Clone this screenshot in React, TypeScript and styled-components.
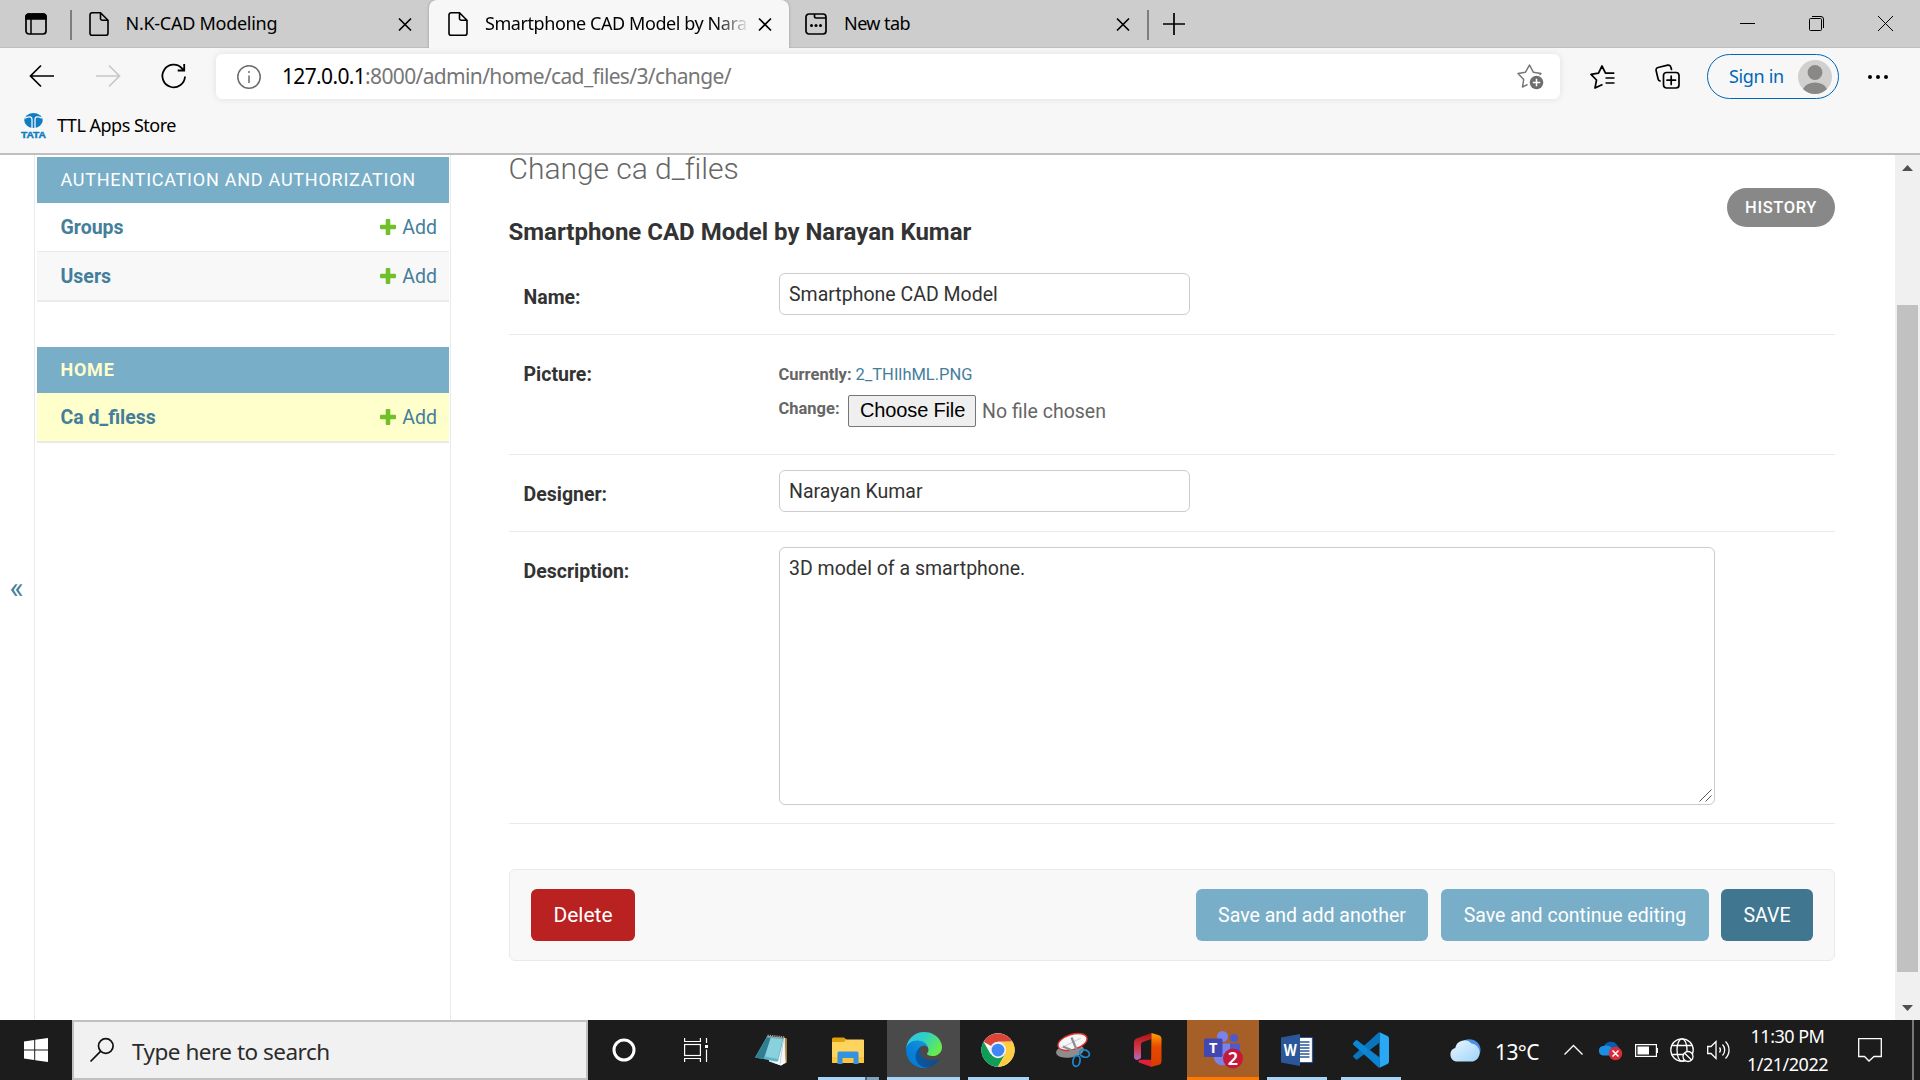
import React from "react";
import styled, { createGlobalStyle, css } from "styled-components";

const GlobalStyle = createGlobalStyle`
  *, *::before, *::after { box-sizing: border-box; }
  body { margin: 0; overflow: hidden; background: #fff; }
  svg { display: block; flex: none; overflow: visible; }
`;

const ui = `"Noto Sans", "Open Sans", sans-serif`;
const web = `Roboto, "Liberation Sans", sans-serif`;

const Screen = styled.div`
  width: 1920px;
  height: 1080px;
  display: flex;
  flex-direction: column;
  overflow: hidden;
  white-space: nowrap;
  font-family: ${ui};
  color: #000;
`;

/* ---------- browser chrome ---------- */
const TabBar = styled.div`
  display: flex;
  align-items: stretch;
  height: 48px;
  background: #cdcdcd;
  box-shadow: inset 0 -1px 0 #bdbdbd;
`;
const TabMenu = styled.div`
  width: 70px;
  padding-left: 25px;
  display: flex;
  align-items: center;
`;
const TabDivider = styled.div`
  width: 1.5px;
  height: 30px;
  margin-top: 10px;
  background: #7d7d7d;
`;
const Tab = styled.div<{ $w: number; $active?: boolean; $pad: number }>`
  width: ${(p) => p.$w}px;
  padding: 0 17px 0 ${(p) => p.$pad}px;
  display: flex;
  align-items: center;
  ${(p) =>
    p.$active &&
    css`
      background: #f7f7f7;
      border-radius: 8px 8px 0 0;
      box-shadow: 0 0 3px rgba(0, 0, 0, 0.25);
      clip-path: inset(0 -3px 0 -3px);
    `}
`;
const TabTitle = styled.div<{ $ls: number; $fade?: boolean }>`
  flex: 1;
  min-width: 0;
  margin: 0 11px 2px 17px;
  font-size: 18px;
  line-height: 45px;
  letter-spacing: ${(p) => p.$ls}px;
  ${(p) => p.$fade && css`mask-image: linear-gradient(to right, #000 88%, transparent 101%);`}
`;
const NewTab = styled.div`
  padding: 13px 0 0 14px;
`;
const WindowControls = styled.div`
  margin-left: auto;
  display: flex;
  gap: 54px;
  padding: 16px 27px 0 0;
`;

const Toolbar = styled.div`
  display: flex;
  align-items: center;
  height: 57px;
  padding: 0 32px 0 29px;
  background: #f7f7f7;
`;
const NavButtons = styled.div`
  display: flex;
  align-items: center;
  gap: 40px;
  width: 187px;
  padding-bottom: 1px;
`;
const AddressBar = styled.div`
  width: 1344px;
  height: 45px;
  padding: 0 16px 0 21px;
  display: flex;
  align-items: center;
  background: #fff;
  border-radius: 6px;
  box-shadow: 0 0 7px rgba(0, 0, 0, 0.1);
`;
const Url = styled.div`
  flex: 1;
  margin: 0 0 2px 21px;
  font-size: 21px;
  line-height: 28px;
  letter-spacing: -0.65px;
  color: #767676;
  b { font-weight: 400; color: #000; }
`;
const ToolIcons = styled.div`
  flex: 1;
  display: flex;
  align-items: center;
  padding-left: 30px;
`;
const SignIn = styled.div`
  width: 132px;
  height: 45px;
  margin: 0 29px 0 27px;
  padding: 0 6px 0 21px;
  display: flex;
  align-items: center;
  justify-content: space-between;
  border: 1.5px solid #0067b8;
  border-radius: 23px;
  color: #0067b8;
  font-size: 18px;
  letter-spacing: -0.35px;
`;
const SignInText = styled.div`
  padding-bottom: 2px;
`;
const Bookmarks = styled.div`
  display: flex;
  align-items: center;
  height: 50px;
  padding: 0 0 7px 21px;
  gap: 11px;
  background: #f7f7f7;
  border-bottom: 2px solid #bfbfbf;
`;
const BookmarkName = styled.div`
  padding-bottom: 2px;
  font-size: 18px;
  letter-spacing: -0.5px;
`;

/* ---------- page ---------- */
const Page = styled.div`
  flex: none;
  height: 865px;
  display: flex;
  overflow: hidden;
  background: #fff;
  font-family: ${web};
  font-size: 19.5px;
  color: #333;
`;
const SidebarToggle = styled.div`
  width: 35px;
  display: flex;
  align-items: center;
  padding-left: 9.5px;
  border-right: 1px solid #eaeaea;
  font-size: 30px;
  color: #447e9b;
`;
const Sidebar = styled.div`
  width: 416px;
  padding: 2px 1px 0 2px;
  border-right: 1px solid #eaeaea;
`;
const AppModule = styled.div`
  margin-bottom: 45px;
  border-bottom: 1px solid #eaeaea;
`;
const AppCaption = styled.div<{ $current?: boolean }>`
  height: 46px;
  padding-left: 23.5px;
  line-height: 46px;
  font-size: 18px;
  letter-spacing: 0.75px;
  background: #79aec8;
  color: ${(p) => (p.$current ? "#ffffcc" : "#fff")};
  font-weight: ${(p) => (p.$current ? 700 : 400)};
`;
const ModelRow = styled.div<{ $bg?: string }>`
  height: 49px;
  padding: 0 12px 0 23.5px;
  display: flex;
  align-items: center;
  background: ${(p) => p.$bg || "#fff"};
  border-bottom: 1px solid #eaeaea;
  color: #447e9b;
`;
const ModelName = styled.div`
  flex: 1;
  font-weight: 700;
`;
const AddLink = styled.div`
  display: flex;
  align-items: center;
  gap: 6px;
`;
const Main = styled.div`
  flex: 1;
  padding: 0 60px 0 58px;
`;
const Title = styled.div`
  height: 32px;
  margin-left: -0.5px;
  font-size: 30px;
  line-height: 28px;
  font-weight: 300;
  letter-spacing: -0.03px;
  color: #666;
`;
const Heading = styled.div`
  display: flex;
  justify-content: space-between;
  align-items: flex-start;
  height: 71px;
`;
const ObjectName = styled.div`
  margin: 30px 0 0 -0.5px;
  font-size: 24px;
  line-height: 30px;
  font-weight: 700;
`;
const History = styled.div`
  width: 108px;
  height: 39px;
  margin-top: 1px;
  text-align: center;
  line-height: 39px;
  border-radius: 20px;
  background: #888;
  color: #fff;
  font-size: 16.5px;
  font-weight: 500;
  letter-spacing: 0.6px;
`;
const FormRow = styled.div<{ $h: number }>`
  display: flex;
  height: ${(p) => p.$h}px;
  padding: 15px 15px 0 14.5px;
  border-bottom: 1px solid #eaeaea;
`;
const Label = styled.div`
  width: 255.5px;
  padding-top: 10px;
  line-height: 30px;
  font-weight: 700;
`;
const Field = styled.div<{ $w: number; $h: number }>`
  position: relative;
  width: ${(p) => p.$w}px;
  height: ${(p) => p.$h}px;
  padding: 0 9px;
  line-height: 41px;
  border: 1px solid #ccc;
  border-radius: 6px;
`;
const Resizer = styled.svg`
  position: absolute;
  right: 2px;
  bottom: 2px;
`;
const FileField = styled.div`
  padding-top: 10px;
  font-size: 16.5px;
  color: #666;
`;
const CurrentFile = styled.div`
  line-height: 30px;
  b { margin: 0 4px 0 -0.5px; }
  span { color: #447e9b; }
`;
const ChangeFile = styled.div`
  display: flex;
  align-items: center;
  margin-top: 5px;
  b { line-height: 20px; margin: -5px 8.5px 0 -0.5px; }
`;
const ChooseFile = styled.div`
  width: 128px;
  height: 32px;
  padding-left: 1px;
  text-align: center;
  line-height: 28px;
  background: #efefef;
  border: 1px solid #767676;
  border-radius: 2px;
  color: #000;
  font-family: "Liberation Sans", Arial, sans-serif;
  font-size: 20px;
  letter-spacing: -0.15px;
`;
const NoFile = styled.div`
  margin-left: 6px;
  font-size: 19.5px;
`;
const SubmitRow = styled.div`
  display: flex;
  align-items: center;
  gap: 12px;
  height: 92px;
  margin-top: 45px;
  padding: 0 21px;
  background: #f8f8f8;
  border: 1px solid #eaeaea;
  border-radius: 6px;
`;
const Button = styled.div<{ $bg: string; $w: number; $size?: number; $mr?: number }>`
  width: ${(p) => p.$w}px;
  height: 52px;
  margin-right: ${(p) => p.$mr || 0}px;
  line-height: ${(p) => (p.$size ? 52 : 54)}px;
  text-align: center;
  border-radius: 6px;
  background: ${(p) => p.$bg};
  color: #fff;
  font-size: ${(p) => p.$size || 19.5}px;
`;
const Spacer = styled.div`
  flex: 1;
`;
const Scrollbar = styled.div`
  width: 25px;
  display: flex;
  flex-direction: column;
  align-items: center;
  padding: 10px 0 9px;
  background: #f0f0f0;
`;
const Thumb = styled.div`
  width: 21px;
  height: 667px;
  margin-top: 134px;
  background: #c1c1c1;
`;

/* ---------- taskbar ---------- */
const Taskbar = styled.div`
  flex: none;
  display: flex;
  height: 60px;
  background: #1c1c1c;
  color: #fff;
`;
const Start = styled.div`
  width: 72px;
  display: grid;
  place-items: center;
`;
const Search = styled.div`
  width: 516px;
  display: flex;
  align-items: center;
  gap: 18px;
  padding-left: 16px;
  background: #f1f1f1;
  border: 2px solid #c0c0c0;
  color: #2b2b2b;
  font-size: 22.5px;
  letter-spacing: -0.5px;
`;
const SearchText = styled.div`
  padding-top: 2px;
`;
const Tile = styled.div<{ $w?: number; $ml?: number; $bg?: string }>`
  width: ${(p) => p.$w || 72}px;
  margin-left: ${(p) => (p.$ml === undefined ? 3 : p.$ml)}px;
  display: flex;
  flex-direction: column;
  align-items: center;
  background: ${(p) => p.$bg || "transparent"};
`;
const TileIcon = styled.div`
  height: 57px;
  padding-top: 3px;
  display: grid;
  place-items: center;
`;
const Underline = styled.div<{ $w: number; $c?: string }>`
  width: ${(p) => p.$w}px;
  height: 3px;
  background: ${(p) => p.$c || "#a6d5fa"};
`;
const Tray = styled.div`
  margin-left: auto;
  width: 471px;
  display: flex;
  align-items: center;
`;
const Temperature = styled.div`
  margin: 3px 0 0 14px;
  width: 69px;
  font-size: 21px;
  letter-spacing: -0.6px;
`;
const Clock = styled.div`
  width: 132px;
  height: 60px;
  padding: 2px 9px 0 0;
  text-align: center;
  font-size: 18px;
  line-height: 28px;
  letter-spacing: -0.5px;
`;
const ShowDesktop = styled.div`
  width: 2px;
  height: 60px;
  margin: 0 6px 0 auto;
  background: #777;
`;
const TrayIcon = styled.div<{ $mr: number }>`
  margin-right: ${(p) => p.$mr}px;
`;

/* ---------- icons ---------- */
const line = { fill: "none", stroke: "#000", strokeWidth: 1.5 } as const;

const DocIcon = () => (
  <svg width="20" height="24" viewBox="0 0 20 24" {...line} strokeWidth={1.6}>
    <path d="M3 .8h8.500L19 8.300v12.900a2 2 0 0 1-2 2H3a2 2 0 0 1-2-2V2.800a2 2 0 0 1 2-2zM11.500 1v5.500a1.800 1.800 0 0 0 1.800 1.800H19" />
  </svg>
);
const CloseIcon = () => (
  <svg width="14" height="14" viewBox="0 0 14 14" {...line} strokeWidth={1.7}>
    <path d="M1 1.500l12 12M13 1.500L1 13.500" />
  </svg>
);
const TabActionsIcon = () => (
  <svg width="22" height="22" viewBox="0 0 22 22" {...line} strokeWidth={1.7}>
    <rect x="1" y="1" width="20" height="20" rx="3" />
    <path d="M1 3.500a2.500 2.500 0 0 1 2.500-2.500h15a2.500 2.500 0 0 1 2.500 2.500V6H1z" fill="#000" />
    <path d="M6 6v15" strokeWidth={1.5} />
  </svg>
);
const NewTabPageIcon = () => (
  <svg width="22" height="22" viewBox="0 0 22 22" {...line} strokeWidth={1.7}>
    <rect x="1" y="1" width="20" height="20" rx="3" />
    <path d="M9.500 1v2.500a1.500 1.500 0 0 0 1.500 1.500h10" />
    <g fill="#000" stroke="none">
      <circle cx="6.500" cy="12.500" r="1.500" />
      <circle cx="11" cy="12.500" r="1.500" />
      <circle cx="15.500" cy="12.500" r="1.500" />
    </g>
  </svg>
);
const Arrow = ({ c, flip }: { c: string; flip?: boolean }) => (
  <svg width="26" height="24" viewBox="0 0 26 24" fill="none" stroke={c} strokeWidth={1.7}>
    <path d={flip ? "M1 12h23M14 1.500L24.500 12 14 22.500" : "M25 12H2M12 1.500L1.500 12 12 22.500"} />
  </svg>
);
const RefreshIcon = () => (
  <svg width="26" height="26" viewBox="0 0 26 26" {...line} strokeWidth={1.8}>
    <path d="M24 13.500a11.300 11.300 0 1 1-3-8.200L23 7.500M23.200 1v6.500h-6.500" />
  </svg>
);
const InfoIcon = () => (
  <svg width="24" height="24" viewBox="0 0 24 24" fill="none" stroke="#6b6b6b" strokeWidth={1.5}>
    <circle cx="12" cy="12" r="11.200" />
    <path d="M12 10.500v7.500" />
    <circle cx="12" cy="7" r="1" fill="#6b6b6b" stroke="none" />
  </svg>
);
const AddFavoriteIcon = () => (
  <svg width="27" height="26" viewBox="0 0 27 26" fill="none" stroke="#767676" strokeWidth={1.5} strokeLinejoin="round">
    <path d="M10.500 20.500L5.500 23l1.200-7.500L1 9.500l7.500-1.300L12.500 1l3.800 7.200L24 9.500l-1.500 1.500" />
    <circle cx="19.500" cy="18.500" r="6.800" fill="#6e6e6e" stroke="none" />
    <path d="M19.500 14.800v7.400M15.800 18.500h7.400" stroke="#fff" />
  </svg>
);
const FavoritesIcon = () => (
  <svg width="25" height="24" viewBox="0 0 25 24" {...line} strokeWidth={1.7} strokeLinejoin="round">
    <path d="M12.500 19.500L5 23l1.500-8L1 9.300l7.500-1.200L12 1l3.500 7.100h8.800M15.500 13h9M15.500 18h9" />
  </svg>
);
const CollectionsIcon = () => (
  <svg width="25" height="25" viewBox="0 0 25 25" {...line} strokeWidth={1.7} strokeLinecap="round">
    <rect x="8.500" y="8.500" width="15.500" height="15.500" rx="3" />
    <path d="M16.200 12v8.500M12 16.200h8.500M16.500 5.500l-.7-2.500a2.500 2.500 0 0 0-3-1.900L3 3.500A2.500 2.500 0 0 0 1.100 6.500l2 8.500a2.500 2.500 0 0 0 2 2" />
  </svg>
);
const Avatar = () => (
  <svg width="34" height="34" viewBox="0 0 34 34">
    <circle cx="17" cy="17" r="17" fill="#d2d0ce" />
    <circle cx="17" cy="12.500" r="7.400" fill="#8a8886" />
    <path d="M5 29a12.500 9 0 0 1 24 0 17 17 0 0 1-24 0z" fill="#8a8886" />
  </svg>
);
const TataIcon = () => (
  <svg width="25" height="25" viewBox="0 0 25 25">
    <ellipse cx="12.500" cy="7.500" rx="9.200" ry="7.500" fill="#0f7dc2" />
    <path d="M4 5.200c5-2.600 7-1.200 7 1.300V15M21 5.200c-5-2.600-7-1.200-7 1.300V15" fill="none" stroke="#f7f7f7" strokeWidth="1.300" />
    <text x="0" y="24.500" fontFamily="Liberation Sans" fontWeight="700" fontSize="9" textLength="25" lengthAdjust="spacingAndGlyphs" fill="#0f7dc2" stroke="#0f7dc2" strokeWidth=".4">TATA</text>
  </svg>
);
const PlusIcon = () => (
  <svg width="16" height="16" viewBox="0 0 16 16">
    <path d="M6.700 0h2.600a1 1 0 0 1 1 1v4.700H15a1 1 0 0 1 1 1v2.600a1 1 0 0 1-1 1h-4.700V15a1 1 0 0 1-1 1H6.700a1 1 0 0 1-1-1v-4.700H1a1 1 0 0 1-1-1V6.700a1 1 0 0 1 1-1h4.700V1a1 1 0 0 1 1-1z" fill="#70bf2b" />
  </svg>
);

const NotepadIcon = () => (
  <svg width="34" height="32" viewBox="0 0 34 32">
    <path d="M28 3l4 1.500v24l-4 1.500z" fill="#a87b33" />
    <path d="M12 2l18 2 .500 25-4.500 2.500-12-4z" fill="#dfe8ea" />
    <path d="M12 2.500l16.500 1.500-4.500 24L0 23.500z" fill="#5db7c9" />
    <path d="M12 3L0 23.500l8.500 1.500 7.500-21z" fill="#2f7f90" />
    <path d="M15.500 4l12 1-4.500 20-13-2.500z" fill="#9ad9e4" opacity=".75" />
    <path d="M28.500 5.500l2 23-4.500 3-8-3 5-1z" fill="#f4f7f8" />
    <path d="M28.500 5.500l-3.500 24" stroke="#b9c4c8" strokeWidth=".8" />
    <path d="M12.500 2l17.500 1.800" stroke="#8f9698" strokeWidth="3" strokeDasharray="1.300 .9" />
  </svg>
);
const ExplorerIcon = () => (
  <svg width="32" height="27" viewBox="0 0 32 27">
    <path d="M0 2a1.500 1.500 0 0 1 1.500-1.500h10.500L15 3v4H0z" fill="#dfa00b" />
    <path d="M14 2.500h17a1 1 0 0 1 1 1V25a1 1 0 0 1-1 1H1a1 1 0 0 1-1-1V5h12z" fill="#ffd45e" />
    <path d="M0 20h32v5a1 1 0 0 1-1 1H1a1 1 0 0 1-1-1z" fill="#fbc540" />
    <path d="M5.500 27V16a1.500 1.500 0 0 1 1.500-1.500h18a1.500 1.500 0 0 1 1.500 1.500v11h-5v-6h-11v6z" fill="#3492de" />
  </svg>
);
const EdgeIcon = () => (
  <svg width="36" height="36" viewBox="0 0 256 256">
    <defs>
      <linearGradient id="ea" x1="0" y1="0" x2="1" y2="0"><stop offset="0" stopColor="#0c59a4" /><stop offset="1" stopColor="#114a8b" /></linearGradient>
      <linearGradient id="eb" x1="1" y1="0" x2="0" y2="1"><stop offset="0" stopColor="#1b9de2" /><stop offset=".6" stopColor="#0680d8" /><stop offset="1" stopColor="#0078d4" /></linearGradient>
      <linearGradient id="ec" x1="0" y1="0" x2="1" y2=".5"><stop offset="0" stopColor="#35c1f1" /><stop offset=".5" stopColor="#2fd0c4" /><stop offset="1" stopColor="#66eb4f" /></linearGradient>
    </defs>
    <path fill="url(#ea)" d="M231 190.500c-3.400 1.800-6.900 3.400-10.500 4.700a101.900 101.900 0 0 1-35.900 6.500c-47.300 0-88.500-32.500-88.500-74.300a31.500 31.500 0 0 1 16.400-27.300c-42.800 1.800-53.800 46.400-53.800 72.500 0 73.900 68.100 81.400 82.800 81.400 7.900 0 19.800-2.300 27-4.600l1.300-.4a128.300 128.300 0 0 0 66.600-52.800 4 4 0 0 0-5.400-5.700z" />
    <path fill="url(#eb)" d="M105.700 241.400A79.200 79.200 0 0 1 83 220.100a80.700 80.700 0 0 1 29.500-120c3.100-1.500 8.500-4.100 15.600-4a32.400 32.400 0 0 1 25.700 13 31.900 31.900 0 0 1 6.300 18.700c0-.2 24.500-79.600-80-79.600-43.900 0-80 41.700-80 78.200a130.200 130.200 0 0 0 12.100 56 128 128 0 0 0 156.400 67.100 75.500 75.500 0 0 1-62.800-8z" />
    <path fill="url(#ec)" d="M152.300 148.900c-.9 1-3.400 2.500-3.400 5.600 0 2.600 1.700 5.200 4.800 7.300 14.300 10 41.400 8.600 41.500 8.600a59.600 59.600 0 0 0 30.300-8.300 61.400 61.400 0 0 0 30.400-52.900c.3-22.400-8-37.300-11.300-43.900C223.500 23.900 177.700 0 128 0A128 128 0 0 0 0 126.200c.5-36.500 36.800-66 80-66 3.500 0 23.500.3 42 10 16.300 8.600 24.900 19 30.800 29.200 6.200 10.700 7.300 24.100 7.300 29.500s-2.700 13.300-7.800 20z" />
  </svg>
);
const ChromeIcon = () => (
  <svg width="34" height="34" viewBox="0 0 48 48">
    <circle cx="24" cy="24" r="23.500" fill="#fff" />
    <path d="M24 24L3.700 12.200A23.500 23.500 0 0 1 44.300 12.200L44.400 12.500H24z" fill="#db4437" />
    <path d="M3.600 12.300A23.500 23.500 0 0 0 24 47.500L34 30 24 24 13.500 29.500z" fill="#0f9d58" />
    <path d="M44.400 12.300A23.500 23.500 0 0 1 24 47.500L34 29.800V12.300z" fill="#ffcd40" />
    <path d="M24 12.300h20.400l-10 17.500z" fill="#ffcd40" />
    <circle cx="24" cy="24" r="11.500" fill="#f1f1f1" />
    <circle cx="24" cy="24" r="9" fill="#4285f4" />
  </svg>
);
const SnipIcon = () => (
  <svg width="34" height="34" viewBox="0 0 34 34">
    <ellipse cx="14" cy="18" rx="14" ry="6.500" fill="#8d8d8d" transform="rotate(-8 14 18)" />
    <ellipse cx="16.500" cy="9" rx="15" ry="7.600" fill="#f6f6f6" stroke="#d9322e" strokeWidth="1.400" transform="rotate(-17 16.500 9)" />
    <path d="M5 15l20-10" stroke="#c9c9c9" />
    <path d="M15.500 4.500L22 20M7 13.500l15 6.500" stroke="#8a8f94" strokeWidth="2.200" />
    <g fill="none" stroke="#1d8ad0" strokeWidth="1.800">
      <ellipse cx="28.500" cy="20.500" rx="5" ry="3.500" transform="rotate(20 28.500 20.500)" />
      <ellipse cx="20.500" cy="28" rx="3.500" ry="5.500" transform="rotate(10 20.500 28)" />
    </g>
  </svg>
);
const OfficeIcon = () => (
  <svg width="28" height="34" viewBox="0 0 28 34">
    <defs>
      <linearGradient id="oa" x1="0" y1="0" x2="0" y2="1"><stop offset="0" stopColor="#b3100f" /><stop offset=".6" stopColor="#d33b52" /><stop offset="1" stopColor="#b56ac4" /></linearGradient>
      <linearGradient id="ob" x1="0" y1="0" x2="0" y2="1"><stop offset="0" stopColor="#ffa400" /><stop offset=".4" stopColor="#e84a00" /><stop offset="1" stopColor="#d83b01" /></linearGradient>
    </defs>
    <path d="M17.500 0L3 5.300A4.500 4.500 0 0 0 0 9.500V24a3 3 0 0 0 4.500 2.600L7 25V11.500a2.500 2.500 0 0 1 1.700-2.400L17.500 6z" fill="url(#oa)" />
    <path d="M5 29.500l12 4.300.5-7H6a1.500 1.500 0 0 0-1 2.700z" fill="#e01f3d" />
    <path d="M17.500 0l7.500 2.200a3.500 3.500 0 0 1 2.500 3.300v23a3.500 3.500 0 0 1-2.500 3.300L17 34z" fill="url(#ob)" />
  </svg>
);
const TeamsIcon = () => (
  <svg width="38" height="38" viewBox="0 0 38 38">
    <circle cx="18.500" cy="5.500" r="5.500" fill="#7b83eb" />
    <circle cx="30" cy="7" r="4" fill="#5059c9" />
    <path d="M23 12.500h12a1 1 0 0 1 1 1V25h-13z" fill="#5059c9" />
    <path d="M10 12.500h16V24a8 8 0 0 1-16 4z" fill="#7b83eb" />
    <rect x="0" y="7.500" width="18.500" height="18.500" rx="1.500" fill="#4347b1" />
    <text x="9.200" y="21.800" textAnchor="middle" fontFamily="Open Sans" fontWeight="700" fontSize="14.500" fill="#fff">T</text>
    <circle cx="29" cy="27.500" r="10" fill="#c4193a" />
    <text x="29" y="34" textAnchor="middle" fontFamily="Noto Sans" fontWeight="600" fontSize="18" fill="#fff">2</text>
  </svg>
);
const WordIcon = () => (
  <svg width="32" height="32" viewBox="0 0 32 32">
    <rect x="17" y="3.500" width="14.500" height="25" rx="1" fill="#fff" stroke="#2b579a" strokeWidth="1.200" />
    <path d="M19 8h9.500M19 11h9.500M19 14h9.500M19 17h9.500M19 20h9.500M19 23h9.500" stroke="#2b579a" strokeWidth="1.300" />
    <path d="M0 3.500L19 0v32L0 28.500z" fill="#2b579a" />
    <text x="9.300" y="22" textAnchor="middle" fontFamily="Noto Sans" fontWeight="700" fontSize="16" textLength="13" lengthAdjust="spacingAndGlyphs" fill="#fff">W</text>
  </svg>
);
const CodeIcon = () => (
  <svg width="36" height="36" viewBox="0 0 36 36">
    <path d="M26.500.3L34.500 4.100A2.500 2.500 0 0 1 36 6.400V29.600a2.500 2.500 0 0 1-1.500 2.300L26.500 35.700z" fill="#29a8f4" />
    <path d="M26.500 35.700a2 2 0 0 1-1.500-.7L.6 12.800a1.400 1.400 0 0 1 0-2.100l2-1.900a1.500 1.500 0 0 1 2-.1L27 25.800z" fill="#0c84d0" />
    <path d="M26.500.3a2 2 0 0 0-1.500.7L.6 23.200a1.400 1.400 0 0 0 0 2.100l2 1.900a1.500 1.500 0 0 0 2 .1L27 10.200z" fill="#0a74bd" />
    <path d="M.6 12.800a1.400 1.400 0 0 1 0-2.100l2-1.900a1.500 1.500 0 0 1 2-.1L16 18l-4.500 4.500z" fill="#0b87d6" />
  </svg>
);
const CloudIcon = () => (
  <svg width="32" height="23" viewBox="0 0 32 23">
    <defs><linearGradient id="ca" x1="0" y1="0" x2="1" y2="1"><stop offset="0" stopColor="#eaf6ff" /><stop offset="1" stopColor="#9fd3fa" /></linearGradient></defs>
    <path d="M15 1.500C22-2 31 2 31.500 10c.5 6-4 8-6 8z" fill="#4a8fe0" />
    <path d="M7 22.500a7 7 0 0 1-.8-13.500A9.500 9.500 0 0 1 22.500 4.500 9.200 9.200 0 0 1 24 22.500z" fill="url(#ca)" />
  </svg>
);
const OneDriveIcon = () => (
  <svg width="25" height="21" viewBox="0 0 25 21">
    <path d="M6 6A7.500 7.500 0 0 1 19 5a6 6 0 0 1 1 7H5z" fill="#0a5cb0" />
    <path d="M5 15.500A4.800 4.800 0 0 1 5 6c4-1.500 7 0 9 2l6 7.500z" fill="#1c8fe3" />
    <circle cx="17.500" cy="13.500" r="6.700" fill="#d92c38" />
    <path d="M14.500 10.500l6 6M20.500 10.500l-6 6" stroke="#fff" strokeWidth="1.500" />
  </svg>
);

const App = () => (
  <Screen>
    <GlobalStyle />
    <TabBar>
      <TabMenu><TabActionsIcon /></TabMenu>
      <TabDivider />
      <Tab $w={357.5} $pad={17}>
        <DocIcon />
        <TabTitle $ls={-0.27}>N.K-CAD Modeling</TabTitle>
        <CloseIcon />
      </Tab>
      <Tab $w={360} $pad={19} $active>
        <DocIcon />
        <TabTitle $ls={-0.43} $fade>Smartphone CAD Model by Nara</TabTitle>
        <CloseIcon />
      </Tab>
      <Tab $w={358} $pad={16}>
        <NewTabPageIcon />
        <TabTitle $ls={-0.55}>New tab</TabTitle>
        <CloseIcon />
      </Tab>
      <TabDivider />
      <NewTab>
        <svg width="22" height="22" viewBox="0 0 22 22" {...line} strokeWidth={1.7}>
          <path d="M11 0v22M0 11h22" />
        </svg>
      </NewTab>
      <WindowControls>
        <svg width="15" height="15" viewBox="0 0 15 15"><path d="M0 7.500h15" stroke="#000" /></svg>
        <svg width="15" height="15" viewBox="0 0 15 15" fill="none" stroke="#000">
          <rect x=".5" y="2.500" width="12" height="12" rx="1" />
          <path d="M3 .5h9a2.500 2.500 0 0 1 2.500 2.500v9" />
        </svg>
        <svg width="15" height="15" viewBox="0 0 15 15"><path d="M0 0l15 15M15 0L0 15" stroke="#000" /></svg>
      </WindowControls>
    </TabBar>

    <Toolbar>
      <NavButtons>
        <Arrow c="#000" />
        <Arrow c="#c8c8c8" flip />
        <RefreshIcon />
      </NavButtons>
      <AddressBar>
        <InfoIcon />
        <Url><b>127.0.0.1</b>:8000/admin/home/cad_files/3/change/</Url>
        <AddFavoriteIcon />
      </AddressBar>
      <ToolIcons>
        <FavoritesIcon />
        <Spacer />
        <CollectionsIcon />
      </ToolIcons>
      <SignIn><SignInText>Sign in</SignInText><Avatar /></SignIn>
      <svg width="20" height="4" viewBox="0 0 20 4"><circle cx="2" cy="2" r="2" /><circle cx="10" cy="2" r="2" /><circle cx="18" cy="2" r="2" /></svg>
    </Toolbar>
    <Bookmarks>
      <TataIcon />
      <BookmarkName>TTL Apps Store</BookmarkName>
    </Bookmarks>

    <Page>
      <SidebarToggle>«</SidebarToggle>
      <Sidebar>
        <AppModule>
          <AppCaption>AUTHENTICATION AND AUTHORIZATION</AppCaption>
          <ModelRow>
            <ModelName>Groups</ModelName>
            <AddLink><PlusIcon />Add</AddLink>
          </ModelRow>
          <ModelRow $bg="#f8f8f8">
            <ModelName>Users</ModelName>
            <AddLink><PlusIcon />Add</AddLink>
          </ModelRow>
        </AppModule>
        <AppModule>
          <AppCaption $current>HOME</AppCaption>
          <ModelRow $bg="#ffffcc">
            <ModelName>Ca d_filess</ModelName>
            <AddLink><PlusIcon />Add</AddLink>
          </ModelRow>
        </AppModule>
      </Sidebar>
      <Main>
        <Title>Change ca d_files</Title>
        <Heading>
          <ObjectName>Smartphone CAD Model by Narayan Kumar</ObjectName>
          <History>HISTORY</History>
        </Heading>
        <FormRow $h={77}>
          <Label>Name:</Label>
          <Field $w={411} $h={42}>Smartphone CAD Model</Field>
        </FormRow>
        <FormRow $h={120}>
          <Label>Picture:</Label>
          <FileField>
            <CurrentFile><b>Currently:</b><span>2_THIlhML.PNG</span></CurrentFile>
            <ChangeFile>
              <b>Change:</b>
              <ChooseFile>Choose File</ChooseFile>
              <NoFile>No file chosen</NoFile>
            </ChangeFile>
          </FileField>
        </FormRow>
        <FormRow $h={77}>
          <Label>Designer:</Label>
          <Field $w={411} $h={42}>Narayan Kumar</Field>
        </FormRow>
        <FormRow $h={292}>
          <Label>Description:</Label>
          <Field $w={936} $h={258}>
            3D model of a smartphone.
            <Resizer width="13" height="13" viewBox="0 0 13 13" stroke="#555" fill="none"><path d="M.5 12.500l12-12M6.500 12.500l6-6" /></Resizer>
          </Field>
        </FormRow>
        <SubmitRow>
          <Button $bg="#ba2121" $w={104} $size={21}>Delete</Button>
          <Spacer />
          <Button $bg="#79aec8" $w={232} $mr={1}>Save and add another</Button>
          <Button $bg="#79aec8" $w={268}>Save and continue editing</Button>
          <Button $bg="#417690" $w={92}>SAVE</Button>
        </SubmitRow>
      </Main>
      <Scrollbar>
        <svg width="11" height="6" viewBox="0 0 11 6"><path d="M0 6L5.500 0 11 6z" fill="#505050" /></svg>
        <Thumb />
        <Spacer />
        <svg width="11" height="6" viewBox="0 0 11 6"><path d="M0 0h11L5.500 6z" fill="#505050" /></svg>
      </Scrollbar>
    </Page>

    <Taskbar>
      <Start>
        <svg width="24" height="24" viewBox="0 0 24 24" fill="#fff"><path d="M0 3.400L10.200 2v9.400H0zM11.200 1.800L24 0v11.400H11.200zM0 12.400h10.200V22L0 20.600zM11.200 12.400H24V24l-12.800-1.800z" /></svg>
      </Start>
      <Search>
        <svg width="24" height="24" viewBox="0 0 24 24" {...line} strokeWidth={1.7} stroke="#111"><circle cx="15.800" cy="8" r="7.300" /><path d="M10.500 13.300L.5 23.500" /></svg>
        <SearchText>Type here to search</SearchText>
      </Search>
      <Tile $ml={0}>
        <TileIcon><svg width="24" height="24" viewBox="0 0 24 24"><circle cx="12" cy="12" r="10" fill="none" stroke="#fff" strokeWidth="3" /></svg></TileIcon>
      </Tile>
      <Tile $ml={0} $w={71}>
        <TileIcon>
          <svg width="24" height="24" viewBox="0 0 24 24" fill="none" stroke="#fff" strokeWidth="1.200">
            <path d="M.6 0v3.500h15.800V0M.6 24v-3.500h15.800V24" /><rect x=".6" y="6.500" width="15.800" height="11" />
            <path d="M22.500 0v5M22.500 11.500V24" /><rect x="21" y="7" width="3" height="3" fill="#fff" stroke="none" />
          </svg>
        </TileIcon>
      </Tile>
      <Tile $ml={5}><TileIcon><NotepadIcon /></TileIcon></Tile>
      <Tile $ml={4}><TileIcon><ExplorerIcon /></TileIcon><Underline $w={61} $c="linear-gradient(to right, #a6d5fa 47px, #4f6675 47px, #4f6675 49px, #7ea3bd 49px)" /></Tile>
      <Tile $w={73} $bg="#4a4a4a"><TileIcon><EdgeIcon /></TileIcon><Underline $w={73} /></Tile>
      <Tile $ml={2}><TileIcon><ChromeIcon /></TileIcon><Underline $w={61} /></Tile>
      <Tile><TileIcon><SnipIcon /></TileIcon></Tile>
      <Tile><TileIcon><OfficeIcon /></TileIcon></Tile>
      <Tile $bg="#a65f27"><TileIcon><TeamsIcon /></TileIcon><Underline $w={72} $c="#ff7800" /></Tile>
      <Tile $w={70}><TileIcon><WordIcon /></TileIcon><Underline $w={60} /></Tile>
      <Tile><TileIcon><CodeIcon /></TileIcon><Underline $w={60} /></Tile>
      <Tray>
        <CloudIcon />
        <Temperature>13°C</Temperature>
        <TrayIcon $mr={15}><svg width="19" height="10" viewBox="0 0 19 10" fill="none" stroke="#fff" strokeWidth="1.400"><path d="M.5 9.500l9-9 9 9" /></svg></TrayIcon>
        <TrayIcon $mr={12}><OneDriveIcon /></TrayIcon>
        <TrayIcon $mr={11}><svg width="24" height="13" viewBox="0 0 24 13"><rect x=".6" y=".6" width="20.800" height="11.800" fill="none" stroke="#fff" strokeWidth="1.200" /><rect x="2.500" y="2.500" width="11.500" height="8" fill="#fff" /><path d="M22.500 4v5" stroke="#fff" /></svg></TrayIcon>
        <TrayIcon $mr={13}>
          <svg width="24" height="24" viewBox="0 0 24 24" fill="none" stroke="#fff" strokeWidth="1.300">
            <circle cx="12" cy="12" r="11.200" /><ellipse cx="12" cy="12" rx="5" ry="11.200" /><path d="M2 7.500h20M1 16.500h14" />
            <circle cx="18" cy="18.500" r="5" fill="#1c1c1c" /><path d="M14.500 15l7 7" />
          </svg>
        </TrayIcon>
        <TrayIcon $mr={-4}>
          <svg width="23" height="20" viewBox="0 0 23 20" fill="none" stroke="#fff" strokeWidth="1.300">
            <path d="M.7 6.500H4l5-5v17l-5-5H.7zM12.500 7.500a4 4 0 0 1 0 5M15.500 4.500a8 8 0 0 1 0 11M18.500 1.500a12 12 0 0 1 0 17" />
          </svg>
        </TrayIcon>
        <Clock><div>11:30 PM</div><div>1/21/2022</div></Clock>
        <svg width="24" height="24" viewBox="0 0 24 24" fill="none" stroke="#fff" strokeWidth="1.300"><path d="M.7.700h22.600v17.800h-7.300L11 23l-4.500-4.500H.7z" /></svg>
        <ShowDesktop />
      </Tray>
    </Taskbar>
  </Screen>
);

export default App;
